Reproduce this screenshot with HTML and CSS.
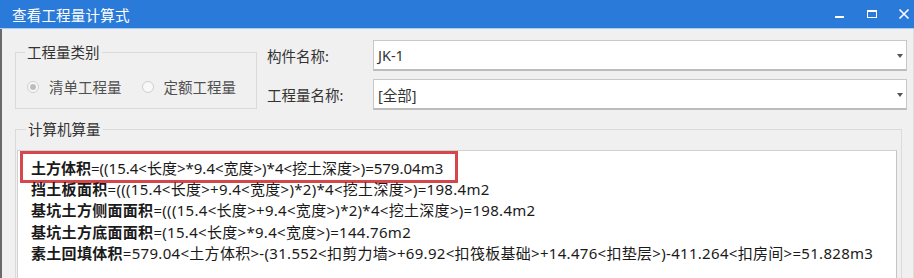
FILE: index.html
```html
<!DOCTYPE html>
<html lang="zh-CN">
<head>
    <meta charset="UTF-8">
    <title>查看工程量计算式</title>
    <link rel="stylesheet" href="styles.css">
</head>
<body>

<div class="dialog">

    <!-- Title bar -->
    <div class="titlebar">
        <span class="title">查看工程量计算式</span>
        <div class="controls">
            <svg class="ctl" width="12" height="12" viewBox="0 0 12 12">
                <rect x="1" y="8" width="9" height="2" fill="#fff"/>
            </svg>
            <svg class="ctl" width="12" height="12" viewBox="0 0 12 12">
                <rect x="1.5" y="2.5" width="9" height="7" fill="none" stroke="#fff" stroke-width="1"/>
                <rect x="1" y="2" width="10" height="2" fill="#fff"/>
            </svg>
            <svg class="ctl" width="12" height="12" viewBox="0 0 12 12">
                <path d="M1.5 1.5 L10.5 10.5 M10.5 1.5 L1.5 10.5" stroke="#fff" stroke-width="1.6" fill="none"/>
            </svg>
        </div>
    </div>

    <div class="content">

        <div class="top">
            <fieldset class="group kind">
                <legend>工程量类别</legend>
                <div class="radios">
                    <label class="radio checked"><span class="circle"></span>清单工程量</label>
                    <label class="radio"><span class="circle"></span>定额工程量</label>
                </div>
            </fieldset>

            <div class="fields">
                <div class="field">
                    <span class="field-label">构件名称:</span>
                    <div class="combo"><span>JK-1</span><span class="arrow"></span></div>
                </div>
                <div class="field">
                    <span class="field-label">工程量名称:</span>
                    <div class="combo"><span>[全部]</span><span class="arrow"></span></div>
                </div>
            </div>
        </div>

        <fieldset class="group calc">
            <legend>计算机算量</legend>
            <div class="formula">
                <div class="line hl"><b>土方体积</b>=((15.4&lt;长度&gt;*9.4&lt;宽度&gt;)*4&lt;挖土深度&gt;)=579.04m3</div>
                <div class="line"><b>挡土板面积</b>=(((15.4&lt;长度&gt;+9.4&lt;宽度&gt;)*2)*4&lt;挖土深度&gt;)=198.4m2</div>
                <div class="line"><b>基坑土方侧面面积</b>=(((15.4&lt;长度&gt;+9.4&lt;宽度&gt;)*2)*4&lt;挖土深度&gt;)=198.4m2</div>
                <div class="line"><b>基坑土方底面面积</b>=(15.4&lt;长度&gt;*9.4&lt;宽度&gt;)=144.76m2</div>
                <div class="line"><b>素土回填体积</b>=579.04&lt;土方体积&gt;-(31.552&lt;扣剪力墙&gt;+69.92&lt;扣筏板基础&gt;+14.476&lt;扣垫层&gt;)-411.264&lt;扣房间&gt;=51.828m3</div>
            </div>
        </fieldset>

    </div>
</div>

</body>
</html>
```

FILE: styles.css
```css
body {
    margin: 0;
    font-family: "Noto Sans", "Noto Sans CJK SC", sans-serif;
    background: #f0f0f0;
}

.dialog {
    width: 914px;
    height: 278px;
    overflow: hidden;
    background: #f0f0f0;
}

.titlebar {
    height: 29px;
    background: #2a7bd9;
    display: flex;
    align-items: center;
    justify-content: space-between;
    padding: 0 4px 0 12px;
    box-sizing: border-box;
    border-bottom: 1px solid #a9cdf2;
}

.title {
    color: #fff;
    font-size: 14.5px;
    letter-spacing: 0.2px;
}

.controls {
    display: flex;
    gap: 20px;
    align-items: center;
}

.ctl {
    display: block;
}

.content {
    border-left: 2px solid #6a6a6a;
    border-right: 1px solid #dedede;
    padding: 11px 6px 0 13px;
    height: 249px;
    box-sizing: border-box;
}

.top {
    display: flex;
    align-items: flex-start;
}

.group {
    border: 1px solid #dadada;
    margin: 0;
    padding: 0;
}

.group legend {
    font-size: 14.5px;
    line-height: 20px;
    color: #333;
    padding: 0 2px;
    margin-left: 9px;
}

.kind {
    width: 242px;
    height: 67px;
    box-sizing: border-box;
    margin-top: 2px;
}

.radios {
    display: flex;
    gap: 20px;
    padding: 14px 0 0 11px;
}

.radio {
    display: flex;
    align-items: center;
    gap: 10px;
    font-size: 14.5px;
    color: #505050;
}

.circle {
    width: 12px;
    height: 12px;
    border: 1px solid #cfcfcf;
    border-radius: 50%;
    background: #f8f8f8;
    box-sizing: border-box;
    display: flex;
    align-items: center;
    justify-content: center;
}

.radio.checked .circle::after {
    content: "";
    width: 6px;
    height: 6px;
    border-radius: 50%;
    background: #bdbdbd;
}

.fields {
    flex: 1;
    margin-left: 10px;
    display: flex;
    flex-direction: column;
    gap: 8px;
}

.field {
    display: flex;
    align-items: center;
}

.field-label {
    width: 106px;
    font-size: 14.5px;
    color: #333;
}

.combo {
    flex: 1;
    height: 31px;
    box-sizing: border-box;
    background: #fff;
    border: 1px solid #c8c8c8;
    border-bottom: 2px solid #bcbcbc;
    display: flex;
    align-items: center;
    justify-content: space-between;
    padding: 0 3px 0 4px;
    font-size: 14.5px;
    color: #333;
}

.arrow {
    width: 0;
    height: 0;
    border-left: 3px solid transparent;
    border-right: 3px solid transparent;
    border-top: 4px solid #555;
    margin-top: 2px;
}

.calc {
    margin: 9px 5px 0 0;
    padding: 11px 4px 0 1px;
    height: 180px;
}

.formula {
    background: #fff;
    border: 1px solid #d2d2d2;
    border-right-color: #c4c4c4;
    height: 200px;
    padding: 6px 0 0 13px;
    font-size: 15px;
    line-height: 21.5px;
    letter-spacing: 0.3px;
    color: #1a1a1a;
    white-space: nowrap;
}

.line b {
    font-weight: bold;
}

.hl {
    width: fit-content;
    letter-spacing: 0;
    border: 3px solid #d5474b;
    padding: 4px 12px 0 8px;
    margin: -6px 0 -4px -11px;
}
```
